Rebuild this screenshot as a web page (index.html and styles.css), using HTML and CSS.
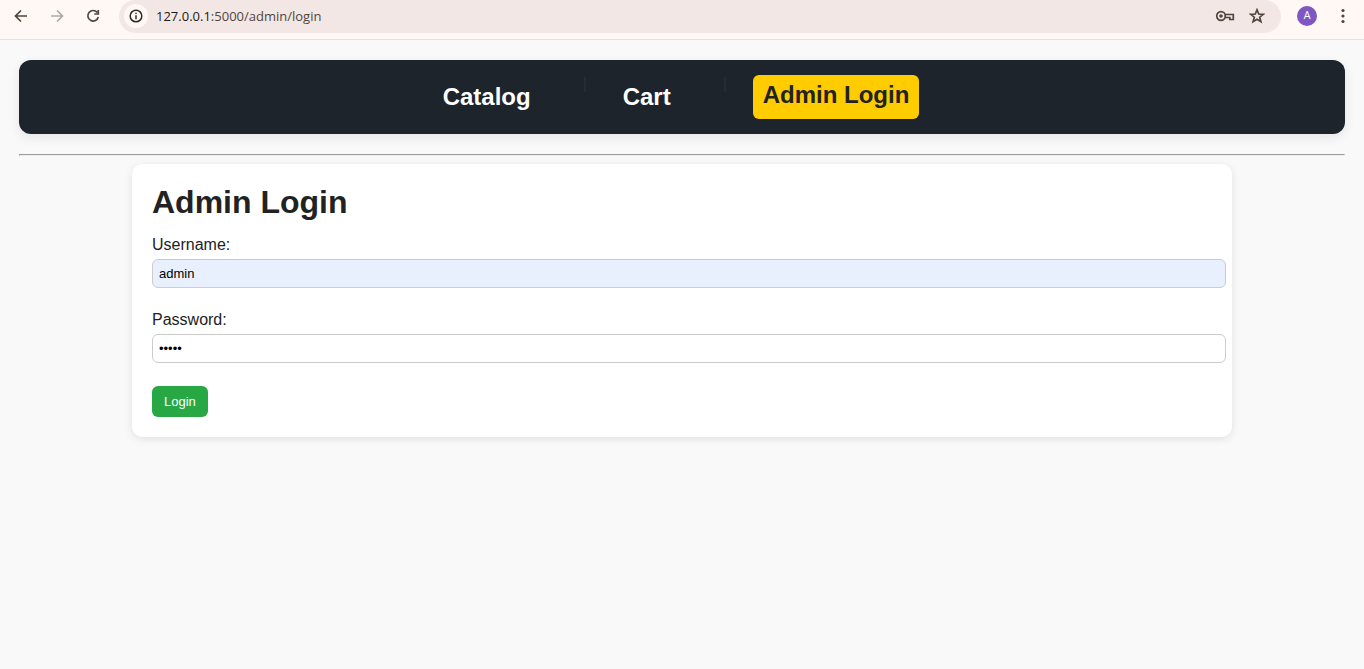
FILE: index.html
```html
<!DOCTYPE html>
<html lang="en">
<head>
<meta charset="utf-8">
<title>Admin Login</title>
<link rel="stylesheet" href="styles.css">
</head>
<body>
<header class="toolbar">
  <button class="tool" type="button" aria-label="Back"><svg width="16" height="16" viewBox="0 0 16 16"><path d="M14 8H3M8 2.500L2.500 8L8 13.500"/></svg></button>
  <button class="tool tool-off" type="button" aria-label="Forward"><svg width="16" height="16" viewBox="0 0 16 16"><path d="M2 8H13M8 2.500L13.500 8L8 13.500"/></svg></button>
  <button class="tool" type="button" aria-label="Reload"><svg width="16" height="16" viewBox="0 0 16 16"><path d="M12.300 4.500A5.300 5.300 0 1 0 13.300 9M13.300 2V6H9.300"/></svg></button>
  <div class="address">
    <button class="site-info" type="button" aria-label="Site information"><svg width="16" height="16" viewBox="0 0 16 16"><circle cx="8" cy="8" r="5.800"/><path d="M8 7.300V11.200M8 4.700V6.100"/></svg></button>
    <span class="url"><span class="host">127.0.0.1</span>:5000/admin/login</span>
    <button class="tool address-tool" type="button" aria-label="Passwords"><svg width="20" height="16" viewBox="0 0 20 16"><circle cx="6" cy="8" r="4.300"/><circle cx="6" cy="8" r="1.800" class="solid"/><path d="M10 6.500H18.300V11.500H14.800V9.500H10"/></svg></button>
    <button class="tool address-tool" type="button" aria-label="Bookmark"><svg width="16" height="16" viewBox="0 0 16 16"><path d="M8 1.800L9.700 6L14.200 6.300L10.700 9.200L11.900 13.700L8 11.200L4.100 13.700L5.300 9.200L1.800 6.300L6.300 6Z"/></svg></button>
  </div>
  <button class="avatar" type="button">A</button>
  <button class="tool menu" type="button" aria-label="Menu"><svg width="16" height="16" viewBox="0 0 16 16"><g class="solid"><circle cx="8" cy="2.500" r="1.600"/><circle cx="8" cy="8" r="1.600"/><circle cx="8" cy="13.500" r="1.600"/></g></svg></button>
</header>
<div class="page">
  <nav class="nav">
    <a class="nav-link" href="#catalog">Catalog</a>
    <span class="divider">|</span>
    <a class="nav-link" href="#cart">Cart</a>
    <span class="divider">|</span>
    <a class="nav-link nav-current" href="#login">Admin Login</a>
  </nav>
  <hr class="rule">
  <main class="card">
    <h1 class="title">Admin Login</h1>
    <form class="form">
      <label class="label" for="username">Username:</label>
      <input class="field field-filled" id="username" type="text" value="admin">
      <label class="label" for="password">Password:</label>
      <input class="field" id="password" type="password" value="admin">
      <button class="submit" type="button">Login</button>
    </form>
  </main>
</div>
</body>
</html>
```
FILE: styles.css
```css
body {
  margin: 0;
  background: #f9f9f9;
  color: #222;
  font: 16px/18px "Liberation Sans", Arial, sans-serif;
}

.toolbar {
  display: flex;
  align-items: center;
  gap: 20px;
  padding: 0 13px 7px;
  height: 32px;
  border-bottom: 1px solid #f0ded5;
  background: #fff8f5;
}

.tool,
.site-info,
.avatar {
  display: flex;
  align-items: center;
  justify-content: center;
  padding: 0;
  border: 0;
  background: none;
}

.toolbar svg {
  fill: none;
  stroke: #52443c;
  stroke-width: 1.7;
}

.toolbar svg .solid {
  fill: #52443c;
  stroke: none;
}

.toolbar .tool-off svg {
  stroke: #b0a7a3;
}

.address {
  display: flex;
  flex: 1;
  align-items: center;
  align-self: flex-start;
  height: 32px;
  margin-left: -2px;
  margin-right: -4px;
  padding: 0 16px 1px 5px;
  border-radius: 17px;
  background: #f2e7e4;
}

.site-info {
  width: 24px;
  height: 24px;
  margin-right: 8px;
  border-radius: 50%;
  background: #fff8f5;
}

.toolbar .site-info svg {
  stroke: #302a28;
  stroke-width: 1.5;
}

.url {
  flex: 1;
  color: #52443c;
  font: 13px/18px "Open Sans", sans-serif;
}

.host {
  color: #221a15;
}

.address-tool {
  margin-left: 14px;
}

.avatar {
  width: 20px;
  height: 20px;
  border-radius: 50%;
  background: #7e57c2;
  color: #fff;
  font: 11px/20px Roboto, sans-serif;
}

.menu {
  margin-left: -2px;
}

.page {
  padding: 20px 19px;
}

.nav {
  display: flex;
  align-items: flex-start;
  justify-content: center;
  padding: 15px 27px 15px 15px;
  border-radius: 12px;
  background: #1d242b;
  box-shadow: 0 4px 12px rgba(0, 0, 0, 0.08);
}

.nav-link {
  padding: 8px 10px;
  border-radius: 6px;
  color: #fff;
  font-size: 24px;
  font-weight: bold;
  line-height: 28px;
  text-decoration: none;
}

.nav-current {
  padding: 6px 10px 10px;
  background: #fc0;
  color: #222;
}

.divider {
  width: 4px;
  margin: 0 26px 0 42px;
  color: #2e2e30;
}

.rule {
  margin: 20px 0 8px;
}

.card {
  max-width: 1060px;
  margin: 0 auto;
  padding: 20px;
  border-radius: 10px;
  background: #fff;
  box-shadow: 0 2px 8px rgba(0, 0, 0, 0.1);
}

.title {
  margin: 0 0 16px;
  font-size: 32px;
  line-height: 36px;
}

.label {
  display: block;
  margin-bottom: 5px;
}

.field {
  display: block;
  width: 100%;
  height: 15px;
  margin-bottom: 23px;
  padding: 6px;
  border: 1px solid #ccc;
  border-radius: 6px;
  background: #fff;
  color: #000;
  font: 13px/15px "Liberation Sans", Arial, sans-serif;
}

.field-filled {
  background: #e8f0fe;
}

.submit {
  display: block;
  padding: 8px 12px;
  border: 0;
  border-radius: 6px;
  background: #28a745;
  color: #fff;
  font: 13px/15px "Liberation Sans", Arial, sans-serif;
}
```
